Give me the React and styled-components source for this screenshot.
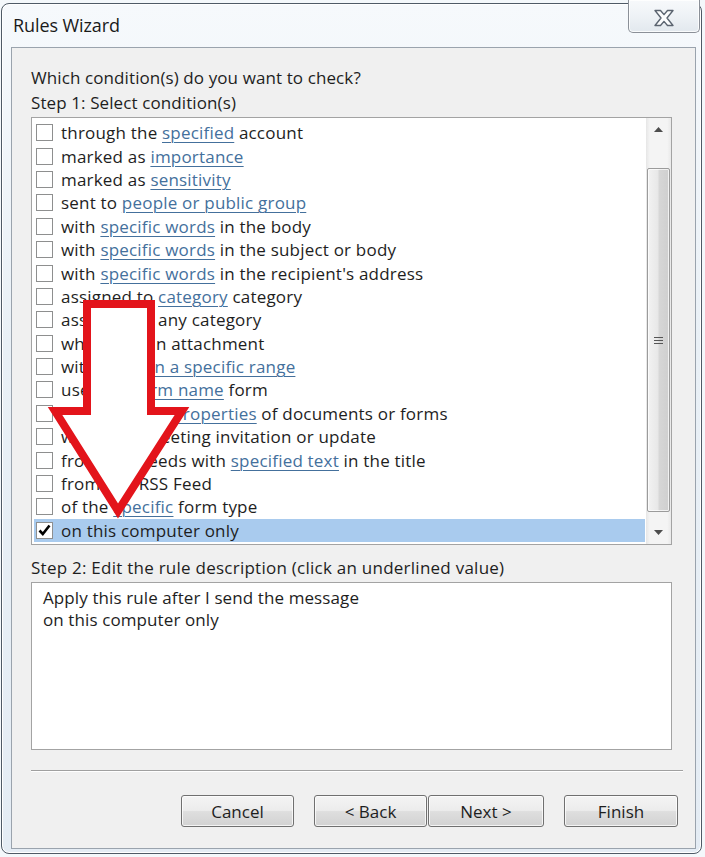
import React from "react";
import styled, { createGlobalStyle } from "styled-components";

const Global = createGlobalStyle`
  html, body { margin: 0; padding: 0; background: #ffffff; }
  body { font-family: "Open Sans", "Noto Sans", sans-serif; color: #1e1e1e; }
  * { box-sizing: border-box; }
`;

const Stage = styled.div`
  position: relative;
  width: 705px;
  height: 857px;
  padding: 3px 3px 3px 1px;
  background: #f4f8fb;
`;

const Frame = styled.div`
  height: 100%;
  border: 1px solid #4f5a66;
  border-radius: 8px;
  background: linear-gradient(180deg, #f6f9fc 0%, #e9f0f6 40%, #e4ecf4 100%);
  box-shadow: inset 0 0 0 1px #ffffff;
  display: flex;
  flex-direction: column;
  padding: 0 5px 4px 9px;
`;

const TitleBar = styled.div`
  height: 43px;
  display: flex;
  justify-content: space-between;
  align-items: flex-start;
`;

const Title = styled.div`
  font-family: "Open Sans", sans-serif;
  font-size: 18px;
  line-height: 22px;
  margin-top: 10px;
  margin-left: 2px;
  color: #1a1a1a;
  letter-spacing: -0.1px;
`;

const CloseButton = styled.div`
  width: 72px;
  height: 33px;
  margin-top: -4px;
  margin-right: -4px;
  border: 1px solid #8b9098;
  border-top: none;
  border-radius: 0 0 5px 5px;
  background: linear-gradient(180deg, #f7f9fb 0%, #eef2f6 50%, #e2e8ee 100%);
  box-shadow: inset 0 0 0 1px rgba(255,255,255,0.8);
  display: flex;
  align-items: center;
  justify-content: center;
  padding-top: 3px;
`;

const Client = styled.div`
  flex: 1;
  border: 1px solid #9aa3ad;
  background: #f0f0f0;
  padding: 17px 12px 0 19px;
  display: flex;
  flex-direction: column;
`;

const Label = styled.div`
  font-size: 17px;
  letter-spacing: 0.1px;
  line-height: 25px;
  color: #1e1e1e;
  white-space: nowrap;
`;

const ListBox = styled.div`
  width: 641px;
  height: 428px;
  margin-top: 2px;
  border: 1px solid #a3a3a3;
  background: #ffffff;
  display: flex;
`;

const Rows = styled.div`
  flex: 1;
  padding: 3px 1px 2px 2px;
  display: flex;
  flex-direction: column;
`;

const Row = styled.div`
  height: 23.4px;
  display: flex;
  align-items: center;
  padding-left: 2px;
  gap: 8px;
  background: ${(p) => (p.$selected ? "#a9cbee" : "transparent")};
  font-size: 17px;
  letter-spacing: 0.2px;
  white-space: nowrap;
  color: #1e1e1e;
`;

const Box = styled.span`
  width: 17px;
  height: 17px;
  flex: none;
  border: 1px solid #8e8f8f;
  background: #ffffff;
  display: flex;
  align-items: center;
  justify-content: center;
`;

const Link = styled.span`
  color: #44709c;
  text-decoration: underline;
  text-underline-offset: 3px;
  text-decoration-thickness: 1px;
`;

const ScrollBar = styled.div`
  width: 25px;
  flex: none;
  background: linear-gradient(90deg, #e6e6e6 0%, #f4f4f4 15%, #f4f4f4 85%, #e9e9e9 100%);
  display: flex;
  flex-direction: column;
  align-items: center;
  padding: 0 1px;
`;

const ArrowCell = styled.div`
  height: 23px;
  width: 100%;
  flex: none;
  display: flex;
  align-items: center;
  justify-content: center;
`;

const Track = styled.div`
  height: ${(p) => p.$h}px;
  flex: none;
`;

const Thumb = styled.div`
  flex: 1;
  width: 23px;
  border: 1px solid #9b9b9b;
  border-radius: 2px;
  background: linear-gradient(90deg, #f2f2f2 0%, #e8e8e8 45%, #d6d6d6 55%, #cfcfcf 100%);
  box-shadow: inset 0 0 0 1px rgba(255,255,255,0.7);
  display: flex;
  align-items: center;
  justify-content: center;
`;

const Step2 = styled(Label)`
  margin-top: 10px;
  letter-spacing: 0.25px;
`;

const DescBox = styled.div`
  width: 641px;
  height: 168px;
  margin-top: 2px;
  border: 1px solid #a3a3a3;
  background: #ffffff;
  padding: 4px 11px;
  font-size: 17px;
  letter-spacing: 0.1px;
  line-height: 22px;
  color: #1e1e1e;
`;

const Separator = styled.div`
  height: 2px;
  margin-top: 20px;
  border-top: 1px solid #a0a0a0;
  border-bottom: 1px solid #ffffff;
`;

const ButtonRow = styled.div`
  display: flex;
  justify-content: flex-end;
  margin-top: 23px;
  padding-right: 5px;
`;

const Button = styled.div`
  width: ${(p) => p.$w || 114}px;
  height: 32px;
  margin-left: ${(p) => p.$gap || 0}px;
  border: 1px solid #707070;
  border-radius: 3px;
  background: linear-gradient(180deg, #f4f4f4 0%, #ececec 48%, #dedede 52%, #d2d2d2 100%);
  box-shadow: inset 0 0 0 1px rgba(255,255,255,0.75);
  display: flex;
  align-items: center;
  justify-content: center;
  font-size: 17px;
  color: #1e1e1e;
`;

const Overlay = styled.svg`
  position: absolute;
  left: 0;
  top: 0;
  pointer-events: none;
`;

const rows = [
  ["through the ", ["specified"], " account"],
  ["marked as ", ["importance"]],
  ["marked as ", ["sensitivity"]],
  ["sent to ", ["people or public group"]],
  ["with ", ["specific words"], " in the body"],
  ["with ", ["specific words"], " in the subject or body"],
  ["with ", ["specific words"], " in the recipient's address"],
  ["assigned to ", ["category"], " category"],
  ["assigned to any category"],
  ["which has an attachment"],
  ["with a size ", ["in a specific range"]],
  ["uses the ", ["form name"], " form"],
  ["with ", ["selected properties"], " of documents or forms"],
  ["which is a meeting invitation or update"],
  ["from RSS Feeds with ", ["specified text"], " in the title"],
  ["from any RSS Feed"],
  ["of the ", ["specific"], " form type"],
  ["on this computer only"],
];

const Check = () => (
  <svg width="13" height="12" viewBox="0 0 13 12">
    <path d="M1.5 6.5 L4.8 10 L11.5 1.5" fill="none" stroke="#000" strokeWidth="2.6" strokeLinejoin="miter" />
  </svg>
);

const CloseX = () => (
  <svg width="22" height="18" viewBox="0 0 22 18">
    <path
      d="M2 1.5 H7.5 L11 5.6 L14.5 1.5 H20 L14 9 L20 16.5 H14.5 L11 12.4 L7.5 16.5 H2 L8 9 Z"
      fill="#fbfcfd"
      stroke="#5b6470"
      strokeWidth="1.4"
      strokeLinejoin="round"
    />
  </svg>
);

export default function App() {
  return (
    <>
      <Global />
      <Stage>
        <Frame>
          <TitleBar>
            <Title>Rules Wizard</Title>
            <CloseButton>
              <CloseX />
            </CloseButton>
          </TitleBar>
          <Client>
            <Label>Which condition(s) do you want to check?</Label>
            <Label>Step 1: Select condition(s)</Label>
            <ListBox>
              <Rows>
                {rows.map((r, i) => {
                  const selected = i === rows.length - 1;
                  return (
                    <Row key={i} $selected={selected}>
                      <Box>{selected && <Check />}</Box>
                      <span>
                        {r.map((s, j) =>
                          Array.isArray(s) ? <Link key={j}>{s[0]}</Link> : <React.Fragment key={j}>{s}</React.Fragment>
                        )}
                      </span>
                    </Row>
                  );
                })}
              </Rows>
              <ScrollBar>
                <ArrowCell>
                  <svg width="9" height="5" viewBox="0 0 9 5"><path d="M0 5 L4.5 0 L9 5 Z" fill="#4d4d4d" /></svg>
                </ArrowCell>
                <Track $h={27} />
                <Thumb>
                  <svg width="9" height="9" viewBox="0 0 9 9">
                    <path d="M0 1.5 H9 M0 4.5 H9 M0 7.5 H9" stroke="#555" strokeWidth="1" />
                  </svg>
                </Thumb>
                <Track $h={9} />
                <ArrowCell>
                  <svg width="9" height="5" viewBox="0 0 9 5"><path d="M0 0 L9 0 L4.5 5 Z" fill="#4d4d4d" /></svg>
                </ArrowCell>
              </ScrollBar>
            </ListBox>
            <Step2>Step 2: Edit the rule description (click an underlined value)</Step2>
            <DescBox>
              <div>Apply this rule after I send the message</div>
              <div>on this computer only</div>
            </DescBox>
            <Separator />
            <ButtonRow>
              <Button $w={113}>Cancel</Button>
              <Button $w={113} $gap={20}>&lt; Back</Button>
              <Button $w={116} $gap={1}>Next &gt;</Button>
              <Button $w={114} $gap={20}>Finish</Button>
            </ButtonRow>
          </Client>
        </Frame>
        <Overlay width="705" height="857" viewBox="0 0 705 857">
          <path
            d="M87 304 L151 304 L151 411 L182 411 L118 511 L55 411 L87 411 Z"
            fill="#ffffff"
            stroke="#e3141b"
            strokeWidth="8"
            strokeLinejoin="miter"
            strokeMiterlimit="4"
          />
        </Overlay>
      </Stage>
    </>
  );
}
